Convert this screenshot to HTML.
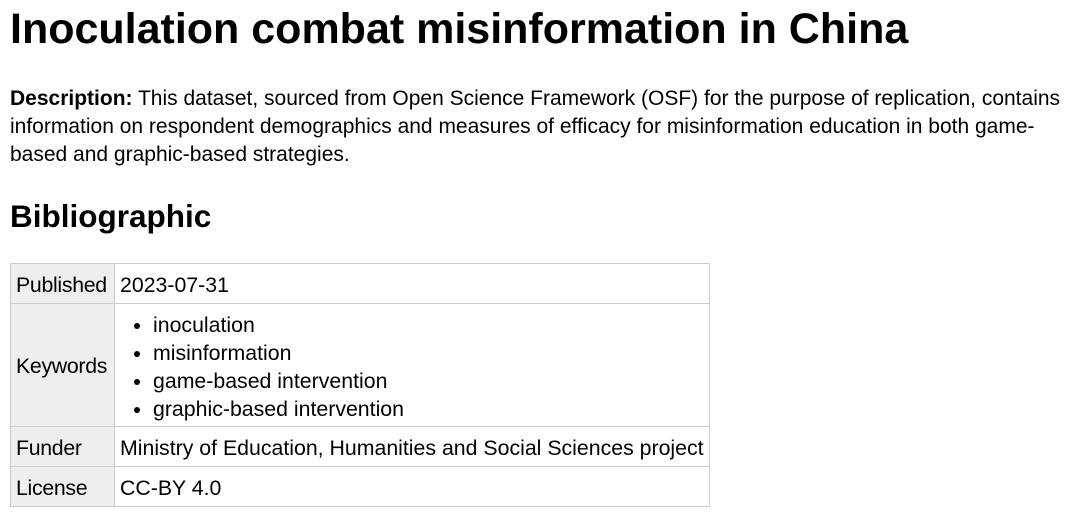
<!DOCTYPE html>
<html><head><meta charset="utf-8"><style>
body{margin:0;background:#fff;color:#000;font-family:"Liberation Sans","DejaVu Sans",sans-serif;width:1085px;height:523px;overflow:hidden;position:relative}
h1{position:absolute;left:10px;top:4px;margin:0;font-size:43px;font-weight:bold;line-height:50px;white-space:nowrap}
p{position:absolute;left:10px;top:85px;margin:0;font-size:21px;line-height:28px;white-space:nowrap}
h2{position:absolute;left:10px;top:196px;margin:0;font-size:31.5px;font-weight:bold;line-height:40px}
table{position:absolute;left:10px;top:263px;border-collapse:collapse;font-size:21.3px;width:699px;table-layout:fixed}
td{border:1px solid #ccc;padding:2px 5px 0 5px;line-height:28px;vertical-align:middle;white-space:nowrap;overflow:hidden}
td.h{background:#eee;letter-spacing:-0.3px}
tr.r td{height:37px}
ul{margin:5px 0 3px 0;padding-left:33px}
li{line-height:28px}
</style></head><body>
<h1>Inoculation combat misinformation in China</h1>
<p><b>Description:</b> This dataset, sourced from Open Science Framework (OSF) for the purpose of replication, contains<br>information on respondent demographics and measures of efficacy for misinformation education in both game-<br>based and graphic-based strategies.</p>
<h2>Bibliographic</h2>
<table>
<colgroup><col style="width:104px"><col style="width:595px"></colgroup>
<tr class="r"><td class="h">Published</td><td>2023-07-31</td></tr>
<tr><td class="h">Keywords</td><td style="height:120px"><ul><li>inoculation</li><li>misinformation</li><li>game-based intervention</li><li>graphic-based intervention</li></ul></td></tr>
<tr class="r"><td class="h">Funder</td><td>Ministry of Education, Humanities and Social Sciences project</td></tr>
<tr class="r"><td class="h">License</td><td>CC-BY 4.0</td></tr>
</table>
</body></html>
